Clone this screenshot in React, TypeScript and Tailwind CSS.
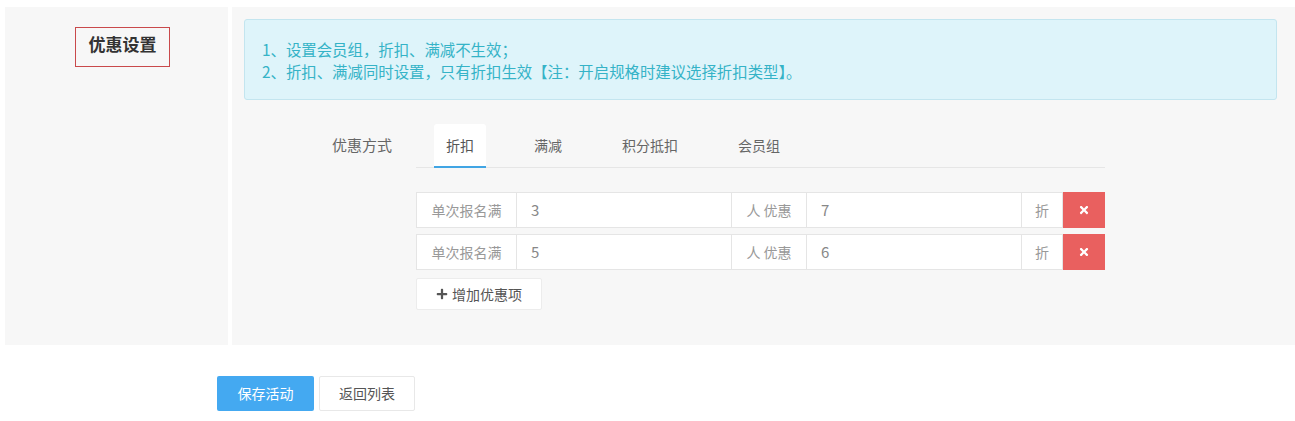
import React, { useState } from "react";
import { FaTimes, FaPlus } from "react-icons/fa";

type Rule = {
  id: number;
  people: string;
  discount: string;
};

const tabs = ["折扣", "满减", "积分抵扣", "会员组"];

const App = () => {
  const [activeTab, setActiveTab] = useState(0);
  const [rules, setRules] = useState<Rule[]>([
    { id: 1, people: "3", discount: "7" },
    { id: 2, people: "5", discount: "6" },
  ]);

  const removeRule = (id: number) => {
    setRules((prev) => prev.filter((r) => r.id !== id));
  };

  const addRule = () => {
    setRules((prev) => [...prev, { id: Date.now(), people: "", discount: "" }]);
  };

  return (
    <div
      className="min-h-[421px] bg-white text-[14px] text-[#555]"
      style={{ fontFamily: '"Noto Sans CJK SC", "Noto Sans", sans-serif' }}
    >
      <div className="flex gap-[4px] pt-[7px] pl-[5px]">
        {/* left label column */}
        <div className="w-[223px] h-[338px] shrink-0 bg-[#f7f7f7] pt-[20px] pl-[70px]">
          <div className="w-[95px] h-[40px] border border-[#c9494b] flex items-center justify-center pb-[6px]">
            <span className="text-[17px] font-bold text-[#333]">优惠设置</span>
          </div>
        </div>

        {/* right content */}
        <div className="flex-1 h-[338px] bg-[#f7f7f7] pt-[12px] pl-[12px] pr-[18px]">
          <div className="h-[81px] border border-[#c3e5ef] rounded-[3px] bg-[#def4fa] pl-[17px] pt-[18px] text-[15.4px] leading-[22px] text-[#35b3c7]">
            <p>1、设置会员组，折扣、满减不生效；</p>
            <p>2、折扣、满减同时设置，只有折扣生效【注：开启规格时建议选择折扣类型】。</p>
          </div>

          <div className="flex mt-[24px]">
            <div className="w-[148px] shrink-0 text-right pt-[10px] text-[15px] text-[#666]">
              优惠方式
            </div>
            <div className="ml-[24px] w-[689px]">
              <div className="flex gap-[36px] pl-[18px] border-b border-[#e6e6e6]">
                {tabs.map((t, i) => (
                  <button
                    key={t}
                    onClick={() => setActiveTab(i)}
                    className={
                      i === activeTab
                        ? "h-[44px] px-[12px] bg-white rounded-t-[3px] border-b-2 border-[#41a5e4] text-[#555] mb-[-1px]"
                        : "h-[44px] px-[12px] text-[#666] mb-[-1px] border-b-2 border-transparent"
                    }
                  >
                    {t}
                  </button>
                ))}
              </div>

              <div className="mt-[24px] flex flex-col gap-[6px]">
                {rules.map((r) => (
                  <div key={r.id} className="flex h-[36px]">
                    <div className="w-[101px] shrink-0 bg-white border border-[#e5e5e5] flex items-center justify-center text-[#999]">
                      单次报名满
                    </div>
                    <input
                      defaultValue={r.people}
                      className="w-[214px] shrink-0 bg-white border-y border-[#e5e5e5] px-[14px] text-[15px] text-[#888] outline-none"
                    />
                    <div className="w-[76px] shrink-0 bg-white border border-[#e5e5e5] flex items-center justify-center text-[#999]">
                      人 优惠
                    </div>
                    <input
                      defaultValue={r.discount}
                      className="w-[214px] shrink-0 bg-white border-y border-[#e5e5e5] px-[14px] text-[15px] text-[#888] outline-none"
                    />
                    <div className="w-[42px] shrink-0 bg-white border border-[#e5e5e5] flex items-center justify-center text-[#999]">
                      折
                    </div>
                    <button
                      onClick={() => removeRule(r.id)}
                      className="w-[42px] shrink-0 bg-[#e9605f] flex items-center justify-center text-white"
                    >
                      <FaTimes className="w-[12px] h-[12px]" />
                    </button>
                  </div>
                ))}
              </div>

              <button
                onClick={addRule}
                className="mt-[8px] w-[126px] h-[32px] bg-white border border-[#ececec] rounded-[2px] flex items-center justify-center gap-[4px] text-[#555]"
              >
                <FaPlus className="w-[12px] h-[12px] text-[#555]" />
                增加优惠项
              </button>
            </div>
          </div>
        </div>
      </div>

      <div className="flex gap-[5px] pl-[217px] mt-[31px]">
        <button className="w-[97px] h-[35px] rounded-[2px] bg-[#44a9f1] text-white text-[14px]">
          保存活动
        </button>
        <button className="w-[96px] h-[35px] rounded-[2px] bg-white border border-[#e8e8e8] text-[#555] text-[14px]">
          返回列表
        </button>
      </div>
    </div>
  );
};

export default App;
